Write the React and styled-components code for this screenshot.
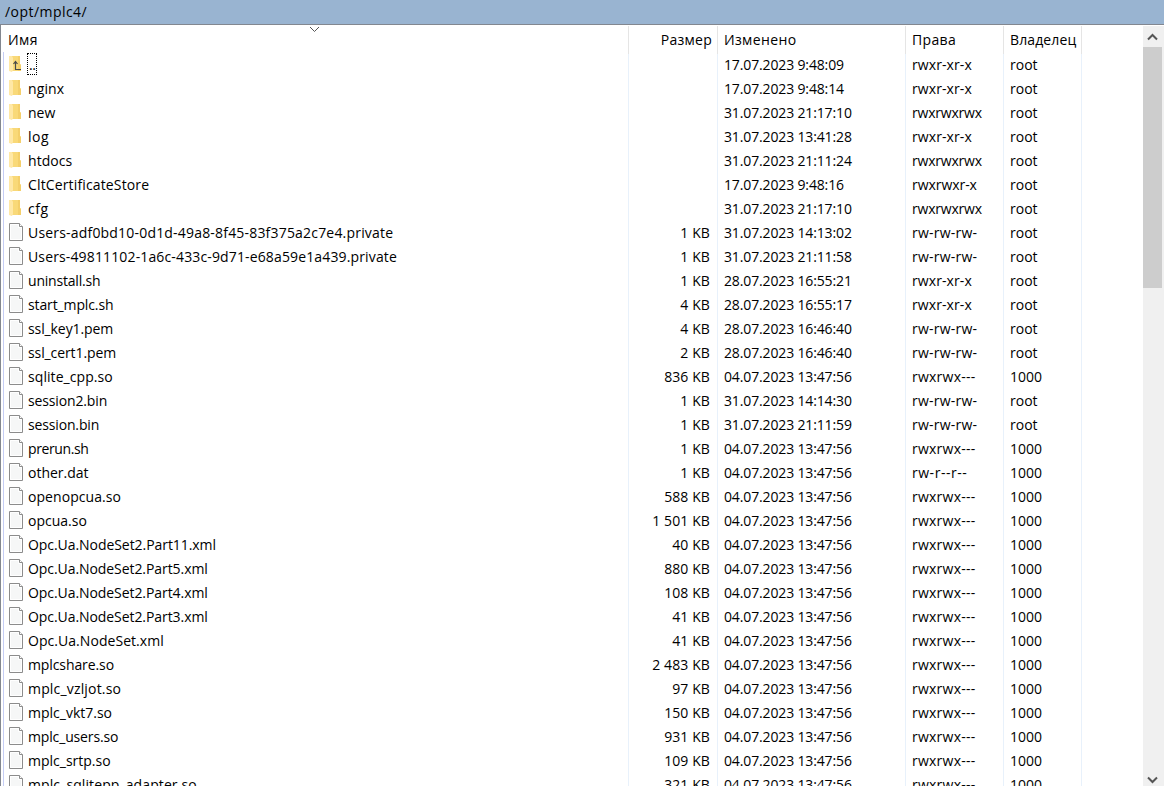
import React from 'react';
import styled, { createGlobalStyle } from 'styled-components';

const GlobalStyle = createGlobalStyle`
  * {
    box-sizing: border-box;
  }

  body {
    margin: 0;
    overflow: hidden;
    background: #fff;
    color: #000;
    font-family: 'Open Sans', 'Noto Sans', sans-serif;
    font-size: 14px;
  }
`;

const Panel = styled.div`
  display: flex;
  flex-direction: column;
  height: 786px;
  width: 1164px;
  overflow: hidden;
`;

const PathBar = styled.div`
  flex: none;
  height: 24px;
  padding-left: 5px;
  line-height: 24px;
  background: #99b4d1;
  letter-spacing: 0.45px;
`;

const Body = styled.div`
  display: flex;
  flex: 1;
  min-height: 0;
  border-top: 1px solid #828790;
  border-left: 1px solid #828790;
`;

const List = styled.div`
  display: flex;
  flex-direction: column;
  flex: 1;
  min-width: 0;
  overflow: hidden;
`;

const HeaderRow = styled.div`
  position: relative;
  display: grid;
  grid-template-columns: 628px 89px 188px 98px 78px;
  flex: none;
  height: 27px;
  padding-top: 1px;
`;

const HeaderCell = styled.div`
  padding: 0 5px 0 ${(props) => (props.$first ? 7 : 6)}px;
  border-right: 1px solid #e5e5e5;
  line-height: 28px;
  text-align: ${(props) => props.$align || 'left'};
  letter-spacing: ${(props) => props.$spacing || 0}px;
  white-space: nowrap;
`;

const SortArrow = styled.svg`
  position: absolute;
  left: 308px;
  top: 1px;
`;

const Rows = styled.div`
  flex: 1;
  min-height: 0;
  overflow: hidden;
  padding-left: 2px;
`;

const Row = styled.div`
  display: grid;
  grid-template-columns: 625px 89px 188px 98px 78px;
  height: 24px;
  border-left: 1px solid #c5cdf5;
`;

const Cell = styled.div`
  padding: 0 7px 0 6px;
  border-right: 1px solid #e8f1fb;
  line-height: 25px;
  text-align: ${(props) => props.$align || 'left'};
  letter-spacing: ${(props) => props.$spacing || 0}px;
  white-space: pre;
`;

const NameCell = styled(Cell)`
  display: flex;
  padding-left: 5px;
`;

const IconBox = styled.span`
  display: flex;
  width: 19px;
  height: 24px;
  padding-top: 3px;
`;

const Focused = styled.span`
  width: 10px;
  height: 22px;
  margin: 1px 0 0 -1px;
  padding-left: 1px;
  border: 1px dotted #000;
  line-height: 21px;
  letter-spacing: -0.5px;
`;

const Scrollbar = styled.div`
  display: flex;
  flex-direction: column;
  width: 21px;
  margin-top: 1px;
  background: #f0f0f0;
`;

const ScrollButton = styled.div`
  display: flex;
  flex: none;
  width: 19px;
  height: ${(props) => props.$height}px;
  align-items: center;
  justify-content: center;
`;

const Track = styled.div`
  flex: 1;
`;

const Thumb = styled.div`
  width: 19px;
  height: 241px;
  background: #cdcdcd;
`;

const FolderIcon = ({ up }) => (
  <svg width="14" height="18" viewBox="0 0 14 18">
    <path d="M3 1h8v8l1 1v6H3z" fill="#f9d978" />
    <path d="M9 1h2v8l1 1v6H9z" fill="#f4cf6a" />
    <path d="M0 1h3l1 2v12l-1 2-3-1z" fill="#ffe8a6" />
    {up && (
      <path d="M6.500 6.500v8h5.500M4.500 9l2-2.500 2 2.500" fill="none" stroke="#4a4a4a" strokeWidth="1.200" />
    )}
  </svg>
);

const FileIcon = () => (
  <svg width="15" height="19" viewBox="0 0 15 19">
    <path d="M.500.500h10l3 3v14H.500z" fill="#f6f7f7" stroke="#8c8c8c" />
    <path d="M1.500 1.500h8v3h3v12h-11z" fill="none" stroke="#fff" />
    <path d="M10.500.500v3h3" fill="#fff" stroke="#8c8c8c" />
  </svg>
);

const july4 = '04.07.2023 13:47:56';

// name, size, changed, rights, owner, tracking of the name
const files = [
  ['..', '', '17.07.2023 9:48:09', 'rwxr-xr-x', 'root'],
  ['nginx', '', '17.07.2023 9:48:14', 'rwxr-xr-x', 'root', 0.1],
  ['new', '', '31.07.2023 21:17:10', 'rwxrwxrwx', 'root'],
  ['log', '', '31.07.2023 13:41:28', 'rwxr-xr-x', 'root', 0.5],
  ['htdocs', '', '31.07.2023 21:11:24', 'rwxrwxrwx', 'root', 0.05],
  ['CltCertificateStore', '', '17.07.2023 9:48:16', 'rwxrwxr-x', 'root', 0.14],
  ['cfg', '', '31.07.2023 21:17:10', 'rwxrwxrwx', 'root', 0.5],
  ['Users-adf0bd10-0d1d-49a8-8f45-83f375a2c7e4.private', '1 KB', '31.07.2023 14:13:02', 'rw-rw-rw-', 'root', 0.19],
  ['Users-49811102-1a6c-433c-9d71-e68a59e1a439.private', '1 KB', '31.07.2023 21:11:58', 'rw-rw-rw-', 'root', 0.14],
  ['uninstall.sh', '1 KB', '28.07.2023 16:55:21', 'rwxr-xr-x', 'root', -0.2],
  ['start_mplc.sh', '4 KB', '28.07.2023 16:55:17', 'rwxr-xr-x', 'root', -0.12],
  ['ssl_key1.pem', '4 KB', '28.07.2023 16:46:40', 'rw-rw-rw-', 'root', -0.1],
  ['ssl_cert1.pem', '2 KB', '28.07.2023 16:46:40', 'rw-rw-rw-', 'root', -0.1],
  ['sqlite_cpp.so', '836 KB', july4, 'rwxrwx---', '1000', 0.07],
  ['session2.bin', '1 KB', '31.07.2023 14:14:30', 'rw-rw-rw-', 'root', -0.14],
  ['session.bin', '1 KB', '31.07.2023 21:11:59', 'rw-rw-rw-', 'root', -0.15],
  ['prerun.sh', '1 KB', july4, 'rwxrwx---', '1000', -0.4],
  ['other.dat', '1 KB', july4, 'rw-r--r--', '1000'],
  ['openopcua.so', '588 KB', july4, 'rwxrwx---', '1000', 0.06],
  ['opcua.so', '1 501 KB', july4, 'rwxrwx---', '1000'],
  ['Opc.Ua.NodeSet2.Part11.xml', '40 KB', july4, 'rwxrwx---', '1000', -0.06],
  ['Opc.Ua.NodeSet2.Part5.xml', '880 KB', july4, 'rwxrwx---', '1000', -0.07],
  ['Opc.Ua.NodeSet2.Part4.xml', '108 KB', july4, 'rwxrwx---', '1000', -0.07],
  ['Opc.Ua.NodeSet2.Part3.xml', '41 KB', july4, 'rwxrwx---', '1000', -0.07],
  ['Opc.Ua.NodeSet.xml', '41 KB', july4, 'rwxrwx---', '1000', 0.05],
  ['mplcshare.so', '2 483 KB', july4, 'rwxrwx---', '1000', -0.1],
  ['mplc_vzljot.so', '97 KB', july4, 'rwxrwx---', '1000', 0.17],
  ['mplc_vkt7.so', '150 KB', july4, 'rwxrwx---', '1000'],
  ['mplc_users.so', '931 KB', july4, 'rwxrwx---', '1000', -0.15],
  ['mplc_srtp.so', '109 KB', july4, 'rwxrwx---', '1000'],
  ['mplc_sqlitepp_adapter.so', '321 KB', july4, 'rwxrwx---', '1000', 0.1],
];

// dashes are set wider than the letters around them
const rightsSpacing = (rights) => {
  const dashes = rights.split('-').length - 1;
  return (dashes * 1.1 - (rights.length - dashes) * 0.2) / rights.length;
};

function FileRow({ file }) {
  const [name, size, changed, rights, owner, spacing] = file;
  const up = name === '..';

  return (
    <Row>
      <NameCell $spacing={spacing}>
        <IconBox>{size === '' ? <FolderIcon up={up} /> : <FileIcon />}</IconBox>
        {up ? <Focused>{name}</Focused> : name}
      </NameCell>
      <Cell $align="right" $spacing={0.1}>{size}</Cell>
      <Cell $spacing={-0.14}>{changed}</Cell>
      <Cell $spacing={rightsSpacing(rights)}>{rights}</Cell>
      <Cell>{owner}</Cell>
    </Row>
  );
}

function App() {
  return (
    <>
      <GlobalStyle />
      <Panel>
        <PathBar>/opt/mplc4/</PathBar>
        <Body>
          <List>
            <HeaderRow>
              <HeaderCell $first $spacing={0.45}>Имя</HeaderCell>
              <HeaderCell $align="right" $spacing={0.25}>Размер</HeaderCell>
              <HeaderCell $spacing={0.36}>Изменено</HeaderCell>
              <HeaderCell $spacing={0.35}>Права</HeaderCell>
              <HeaderCell $spacing={0.12}>Владелец</HeaderCell>
              <SortArrow width="11" height="7" viewBox="0 0 11 7">
                <path d="M1 1l4.500 4.500L10 1" fill="none" stroke="#555" />
              </SortArrow>
            </HeaderRow>
            <Rows>
              {files.map((file) => (
                <FileRow key={file[0]} file={file} />
              ))}
            </Rows>
          </List>
          <Scrollbar>
            <ScrollButton $height={21}>
              <svg width="11" height="8" viewBox="0 0 11 8">
                <path d="M1 6.500L5.500 2 10 6.500" fill="none" stroke="#555" strokeWidth="2" />
              </svg>
            </ScrollButton>
            <Track>
              <Thumb />
            </Track>
            <ScrollButton $height={13}>
              <svg width="11" height="8" viewBox="0 0 11 8">
                <path d="M1 1.500l4.500 4.500L10 1.500" fill="none" stroke="#555" strokeWidth="2" />
              </svg>
            </ScrollButton>
          </Scrollbar>
        </Body>
      </Panel>
    </>
  );
}

export default App;
